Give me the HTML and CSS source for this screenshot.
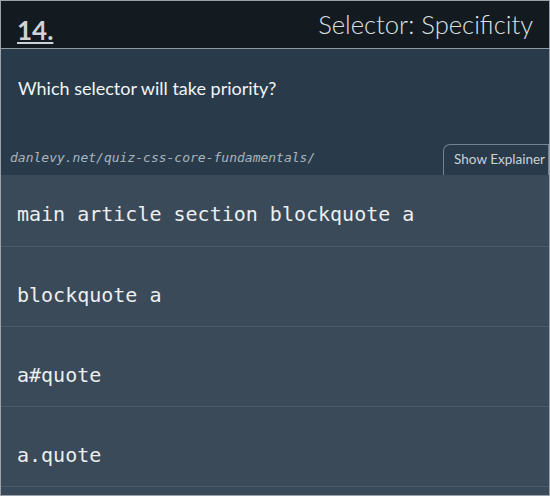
FILE: index.html
```html
<!DOCTYPE html>
<html>
<head>
<meta charset="utf-8">
<link rel="stylesheet" href="styles.css">
</head>
<body>
<div class="quiz">
  <header class="head">
    <span class="num">14.</span>
    <span class="topic">Selector: Specificity</span>
  </header>
  <section class="question">
    <p class="prompt">Which selector will take priority?</p>
    <div class="meta">
      <span class="url">danlevy.net/quiz-css-core-fundamentals/</span>
      <span class="tab">Show Explainer</span>
    </div>
  </section>
  <ul class="options">
    <li class="option">main article section blockquote a</li>
    <li class="option">blockquote a</li>
    <li class="option">a#quote</li>
    <li class="option">a.quote</li>
    <li class="option"></li>
  </ul>
</div>
</body>
</html>
```
FILE: styles.css
```css
* { box-sizing: border-box; }
html, body { margin: 0; padding: 0; }
body { background: #3a4a58; overflow: hidden; }
.quiz {
  width: 550px;
  height: 496px;
  border: 1px solid #9aa3ab;
  background: #3a4a58;
  overflow: hidden;
  display: flex;
  flex-direction: column;
}
.head {
  height: 48px;
  flex: none;
  background: #131a20;
  border-bottom: 1px solid #8f9aa3;
  display: flex;
  align-items: flex-start;
  justify-content: space-between;
  padding: 0 16px 0 16px;
}
.num {
  font-family: Lato, sans-serif;
  font-weight: 700;
  font-size: 26px;
  color: #cfd3d6;
  text-decoration: underline;
  text-decoration-thickness: 2px;
  text-underline-offset: 2px;
  line-height: 1;
  margin-top: 16px;
}
.topic {
  font-family: Lato, sans-serif;
  font-weight: 300;
  font-size: 25.6px;
  color: #dde1e4;
  line-height: 1;
  margin-top: 11px;
}
.question {
  flex: none;
  height: 126px;
  background: #293b4a;
  display: flex;
  flex-direction: column;
  justify-content: space-between;
}
.prompt {
  margin: 0;
  padding: 29px 16px 0 17px;
  font-family: Lato, sans-serif;
  font-size: 18px;
  color: #f2f4f5;
  line-height: 21px;
}
.meta {
  display: flex;
  justify-content: space-between;
  align-items: flex-end;
}
.url {
  font-family: "DejaVu Sans Mono", monospace;
  font-style: italic;
  font-size: 13px;
  color: #a9b5be;
  padding-left: 9px;
  padding-bottom: 10px;
}
.tab {
  font-family: Lato, sans-serif;
  font-size: 13.5px;
  color: #c9d1d8;
  border: 1px solid #75848f;
  border-bottom: none;
  border-top-left-radius: 7px;
  height: 31px;
  line-height: 29px;
  padding: 0 3px 0 10px;
  white-space: nowrap;
}
.options {
  list-style: none;
  margin: 0;
  padding: 0;
}
.option {
  height: 80px;
  border-bottom: 1px solid #4b5b69;
  padding: 38px 16px 0 16px;
  font-family: "DejaVu Sans Mono", monospace;
  font-size: 20px;
  line-height: 20px;
  color: #eceff1;
}
.option:first-child {
  height: 72px;
  padding-top: 29px;
}
```
